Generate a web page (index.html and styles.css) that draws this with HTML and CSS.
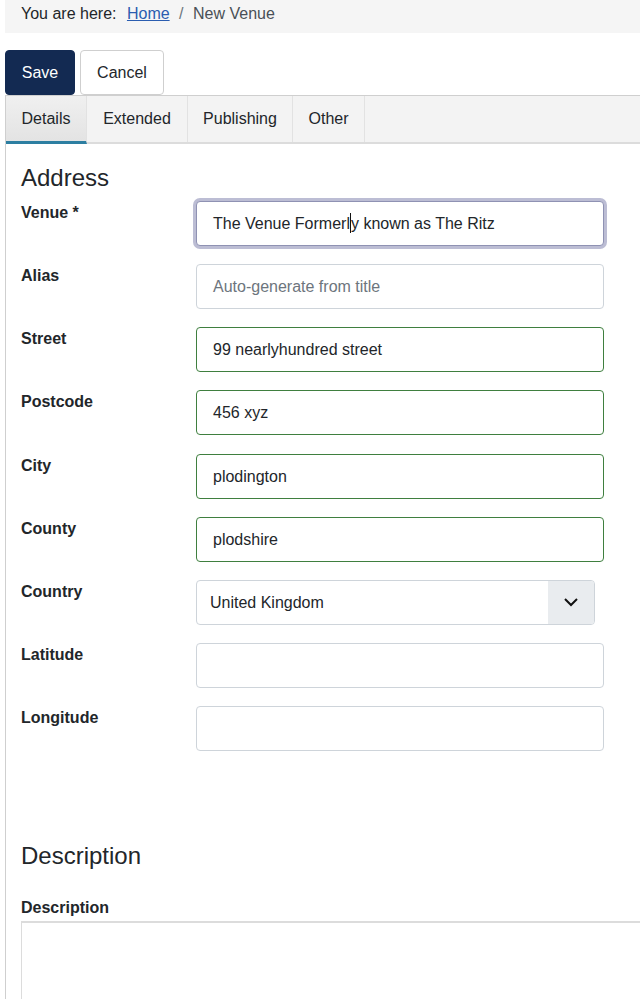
FILE: index.html
```html
<!DOCTYPE html>
<html lang="en">
<head>
<meta charset="utf-8">
<title>New Venue</title>
<link rel="stylesheet" href="styles.css">
</head>
<body>
<nav class="breadcrumb">
  <span class="bc-label">You are here:</span>
  <a href="#" class="bc-link">Home</a>
  <span class="bc-sep">/</span>
  <span class="bc-current">New Venue</span>
</nav>

<div class="toolbar">
  <button class="btn btn-save" type="button">Save</button>
  <button class="btn btn-cancel" type="button">Cancel</button>
</div>

<div class="tabs">
  <div class="tab active">Details</div>
  <div class="tab">Extended</div>
  <div class="tab">Publishing</div>
  <div class="tab">Other</div>
</div>

<div class="panel">
  <h2 class="section-title">Address</h2>
  <div class="field">
    <label class="field-label">Venue *</label>
    <div class="input focused"><span>The Venue Formerl</span><span class="caret"></span><span>y known as The Ritz</span></div>
  </div>
  <div class="field">
    <label class="field-label">Alias</label>
    <div class="input placeholder">Auto-generate from title</div>
  </div>
  <div class="field">
    <label class="field-label">Street</label>
    <div class="input valid">99 nearlyhundred street</div>
  </div>
  <div class="field">
    <label class="field-label">Postcode</label>
    <div class="input valid">456 xyz</div>
  </div>
  <div class="field">
    <label class="field-label">City</label>
    <div class="input valid">plodington</div>
  </div>
  <div class="field">
    <label class="field-label">County</label>
    <div class="input valid">plodshire</div>
  </div>
  <div class="field">
    <label class="field-label">Country</label>
    <div class="select">
      <span class="select-value">United Kingdom</span>
      <span class="select-btn">
        <svg width="16" height="10" viewBox="0 0 16 10"><path d="M2 2 L8 8 L14 2" fill="none" stroke="#111" stroke-width="2"/></svg>
      </span>
    </div>
  </div>
  <div class="field">
    <label class="field-label">Latitude</label>
    <div class="input"></div>
  </div>
  <div class="field">
    <label class="field-label">Longitude</label>
    <div class="input"></div>
  </div>

  <h2 class="section-title desc-title">Description</h2>
  <label class="desc-label">Description</label>
  <div class="editor"></div>
</div>
</body>
</html>
```
FILE: styles.css
```css
* { box-sizing: border-box; }
html, body { margin: 0; padding: 0; }
body {
  font-family: "Liberation Sans", Arial, sans-serif;
  font-size: 16px;
  color: #22262a;
  background: #fff;
  width: 640px;
  height: 999px;
  overflow: hidden;
}
.breadcrumb {
  margin-left: 5px;
  height: 33px;
  background: #f5f5f5;
  padding: 5px 0 0 16px;
  line-height: 18px;
  color: #22262a;
}
.bc-label { margin-right: 6px; }
.bc-link { color: #2a5db0; text-decoration: underline; }
.bc-sep { color: #6c757d; margin: 0 5px; }
.bc-current { color: #495057; }

.toolbar {
  display: flex;
  gap: 5px;
  margin: 17px 0 0 5px;
}
.btn {
  height: 45px;
  font: inherit;
  border-radius: 4px;
  padding: 0;
}
.btn-save {
  width: 70px;
  background: #132a52;
  border: 1px solid #132a52;
  color: #fff;
}
.btn-cancel {
  width: 84px;
  background: #fff;
  border: 1px solid #cfcfcf;
  color: #22262a;
}

.tabs {
  display: flex;
  margin-left: 5px;
  height: 49px;
  background: #f3f3f3;
  border-top: 1px solid #cfcfcf;
  border-left: 1px solid #cfcfcf;
  border-bottom: 2px solid #dcdcdc;
}
.tab {
  padding: 0;
  text-align: center;
  line-height: 46px;
  border-right: 1px solid #e2e2e2;
  color: #22262a;
}
.tab.active {
  width: 81px;
  background: linear-gradient(#f0f0f0, #e3e3e3);
  border-bottom: 3px solid #2c7ea1;
  margin-bottom: -2px;
  line-height: 46px;
}
.tab:nth-child(2) { width: 101px; }
.tab:nth-child(3) { width: 105px; }
.tab:nth-child(4) { width: 72px; }

.panel {
  margin-left: 5px;
  border-left: 1px solid #cfcfcf;
  padding: 19px 0 0 15px;
  height: 855px;
  overflow: hidden;
}
.section-title {
  margin: 0;
  font-size: 24px;
  font-weight: 400;
  line-height: 29px;
}
.field {
  display: grid;
  grid-template-columns: 175px 408px;
  align-items: start;
  margin-bottom: 18.125px;
}
.section-title + .field { margin-top: 9px; }
.field-label {
  font-weight: 700;
  line-height: 24px;
}
.input {
  height: 45px;
  border: 1px solid #ced4da;
  border-radius: 4px;
  padding: 0 16px;
  line-height: 43px;
  color: #22262a;
  background: #fff;
  white-space: nowrap;
}
.input.placeholder { color: #6d757d; }
.input.valid { border-color: #3f7f3f; }
.input.focused {
  border-color: #8f92b3;
  box-shadow: 0 0 0 3px #bcbdd4;
}
.caret {
  display: inline-block;
  width: 1px;
  height: 20px;
  background: #111;
  vertical-align: -4px;
}
.select {
  width: 399px;
  height: 45px;
  display: flex;
  border: 1px solid #ced4da;
  border-radius: 4px;
  overflow: hidden;
}
.select-value {
  flex: 1;
  padding-left: 13px;
  line-height: 43px;
}
.select-btn {
  width: 46px;
  background: #e9ecef;
  display: flex;
  align-items: center;
  justify-content: center;
}
.desc-title { margin-top: 90px; }
.desc-label {
  display: block;
  font-weight: 700;
  line-height: 24px;
  margin-top: 26px;
}
.editor {
  margin-top: 1px;
  height: 200px;
  border-top: 2px solid #dcdcdc;
  border-left: 1px solid #dcdcdc;
  margin-right: -20px;
}
```
